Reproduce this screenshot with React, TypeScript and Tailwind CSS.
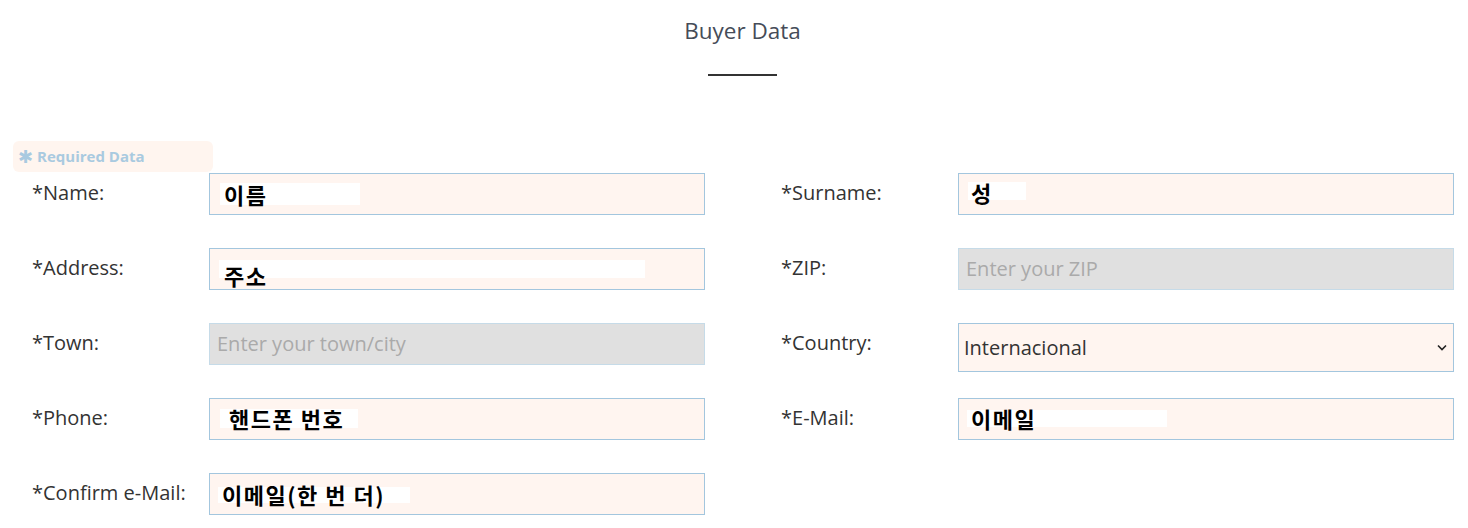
import React from "react";

type Patch = {
  text: string;
  box: string;
  inner: string;
};

type Field = {
  label: string;
  kind: "patch" | "placeholder" | "select" | "none";
  patch?: Patch;
  placeholder?: string;
  value?: string;
};

const rows: Field[][] = [
  [
    {
      label: "*Name:",
      kind: "patch",
      patch: { text: "이름", box: "ml-[10px] mt-[9px] w-[140px] h-[22px]", inner: "pl-[4px] mt-[0px]" },
    },
    {
      label: "*Surname:",
      kind: "patch",
      patch: { text: "성", box: "ml-[9px] mt-[8px] w-[58px] h-[18px]", inner: "pl-[3px] mt-[-1px]" },
    },
  ],
  [
    {
      label: "*Address:",
      kind: "patch",
      patch: { text: "주소", box: "ml-[9px] mt-[11px] w-[426px] h-[18px]", inner: "pl-[5px] mt-[4px]" },
    },
    { label: "*ZIP:", kind: "placeholder", placeholder: "Enter your ZIP" },
  ],
  [
    { label: "*Town:", kind: "placeholder", placeholder: "Enter your town/city" },
    { label: "*Country:", kind: "select", value: "Internacional" },
  ],
  [
    {
      label: "*Phone:",
      kind: "patch",
      patch: { text: "핸드폰 번호", box: "ml-[10px] mt-[10px] w-[138px] h-[19px]", inner: "pl-[9px] mt-[-2px]" },
    },
    {
      label: "*E-Mail:",
      kind: "patch",
      patch: { text: "이메일", box: "ml-[8px] mt-[11px] w-[200px] h-[17px]", inner: "pl-[4px] mt-[-3px]" },
    },
  ],
  [
    {
      label: "*Confirm e-Mail:",
      kind: "patch",
      patch: { text: "이메일(한 번 더)", box: "ml-[8px] mt-[13px] w-[192px] h-[16px]", inner: "pl-[4px] mt-[-4px]" },
    },
    { label: "", kind: "none" },
  ],
];

const FieldCell = ({ field }: { field: Field }) => {
  if (field.kind === "none") return <div />;
  return (
    <div className="flex items-start h-[42px]">
      <label className="w-[196px] shrink-0 pl-[19px] pt-[7px] text-[20px] leading-[26px] text-[#333]">
        {field.label}
      </label>
      {field.kind === "patch" && field.patch && (
        <div className="w-[496px] h-[42px] shrink-0 border border-[#a3c6de] bg-[#fff5f0] flex items-start">
          <div className={`${field.patch.box} bg-white`}>
            <div
              className={`${field.patch.inner} whitespace-nowrap font-bold text-[22px] leading-[22px] tracking-[1.5px] text-black font-['Noto_Sans_CJK_KR',sans-serif]`}
            >
              {field.patch.text}
            </div>
          </div>
        </div>
      )}
      {field.kind === "placeholder" && (
        <div className="w-[496px] h-[42px] shrink-0 border border-[#c6dbe8] bg-[#e0e0e0] flex items-center px-[7px] text-[20px] text-[#aaaaaa]">
          {field.placeholder}
        </div>
      )}
      {field.kind === "select" && (
        <div className="w-[496px] h-[49px] shrink-0 border border-[#a3c6de] bg-[#fff5f0] flex items-center justify-between pl-[5px] pr-[6px] text-[20px] text-[#333]">
          <span>{field.value}</span>
          <svg width="10" height="7" viewBox="0 0 10 7" fill="none">
            <path d="M1 1.5 L5 5.5 L9 1.5" stroke="#222" strokeWidth="1.6" />
          </svg>
        </div>
      )}
    </div>
  );
};

export default function App() {
  return (
    <div className="w-[1468px] h-[528px] overflow-hidden bg-white font-['Open_Sans',sans-serif]">
      <div className="pl-[17px] pt-[15px] text-center text-[22.5px] leading-[32px] text-[#454c58]">Buyer Data</div>
      <div className="ml-[708px] mt-[27px] w-[69px] h-[2px] bg-[#333]" />
      <div className="ml-[13px] mt-[65px] w-[200px] h-[31px] rounded-md bg-[#fff5ef] flex items-center pl-[5px] gap-[4px] text-[15px] font-bold text-[#a9cae0]">
        <span className="text-[18px] leading-none font-bold font-['DejaVu_Sans',sans-serif]">✱</span>
        <span>Required Data</span>
      </div>
      <div className="ml-[13px] mt-[1px] grid grid-cols-[692px_692px] auto-rows-[42px] gap-x-[57px] gap-y-[33px]">
        {rows.map((row, i) => (
          <React.Fragment key={i}>
            <FieldCell field={row[0]} />
            <FieldCell field={row[1]} />
          </React.Fragment>
        ))}
      </div>
    </div>
  );
}
